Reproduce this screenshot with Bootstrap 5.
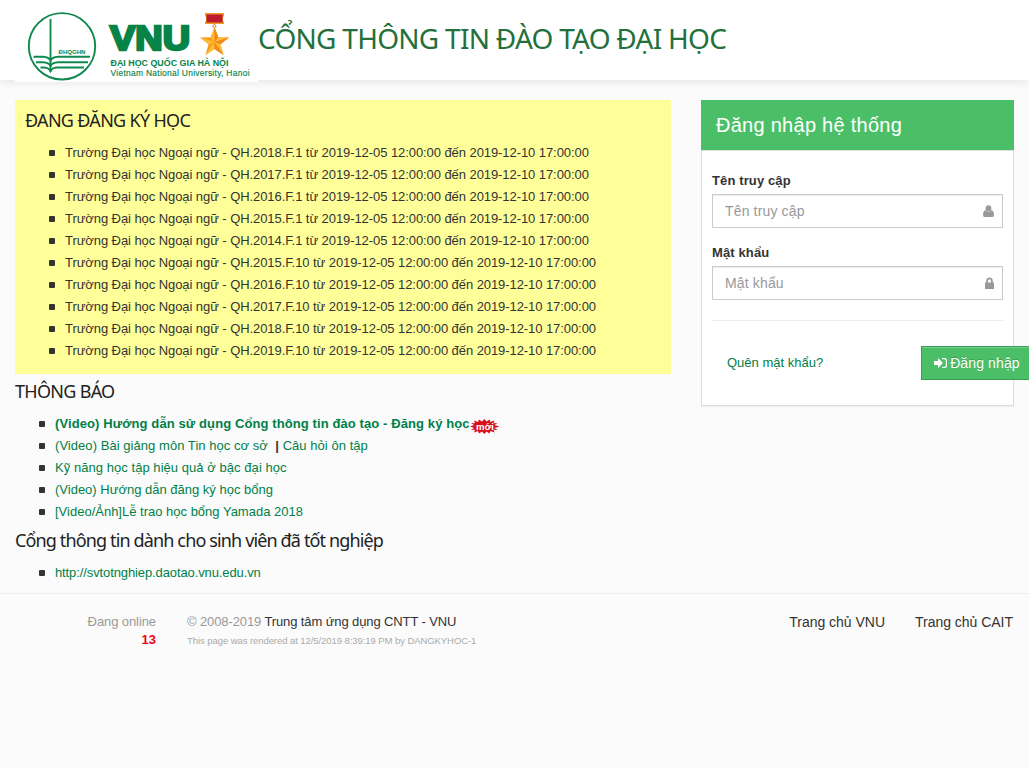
<!DOCTYPE html>
<html lang="vi">
<head>
<meta charset="utf-8">
<meta name="viewport" content="width=device-width, initial-scale=1">
<title>Cổng thông tin đào tạo đại học</title>
<link href="https://cdn.jsdelivr.net/npm/bootstrap@5.3.0/dist/css/bootstrap.min.css" rel="stylesheet">
<style>
html,body{overflow:hidden}
body{font-family:"Liberation Sans",sans-serif;font-size:13px;line-height:22px;color:#333;background:#fbfbfb;height:768px}
a{color:#008048;text-decoration:none}
.container-fluid,.row{--bs-gutter-x:30px}
.site-head{height:80px;background:#fff;box-shadow:0 1px 10px rgba(0,0,0,.1)}
.brand-logo{width:243px;height:82px;background:#fff;flex:none;position:relative}
.site-title{font:28px/34px "Noto Sans",sans-serif;color:#23703d;margin:21px 0 0;white-space:nowrap;letter-spacing:-.73px}
.sec-title{font:18px/24px "Noto Sans",sans-serif;color:#222;margin:0;white-space:nowrap;letter-spacing:-.7px}
.notice{background:#ff9;height:274px;padding:8px 10px 0}
ul.sq{list-style:none;margin:9px 0 0;padding-left:40px}
ul.sq li{height:22px;white-space:nowrap;position:relative}
ul.sq li::before{content:"";position:absolute;left:-16px;top:8px;width:6px;height:6px;background:#333;border-radius:1px}
ul.reg{margin-top:10px;letter-spacing:-.072px}
.login-head{background:#4bbf67;color:#fff;height:50px;font-size:20px;line-height:50px;padding-left:15px;letter-spacing:.27px}
.login-body{background:#fff;border:1px solid #ddd;height:256px;padding:19px 10px 0;box-shadow:0 1px 1px rgba(0,0,0,.05)}
.login-body label{font-weight:bold;display:block;height:24px;letter-spacing:.12px}
.login-body .form-control{height:34px;border:1px solid #ccc;border-radius:0;font-size:14px;padding:6px 12px;letter-spacing:.15px;box-shadow:inset 0 1px 1px rgba(0,0,0,.075)}
.form-control::placeholder{color:#999}
.field-icon{position:absolute;right:9px;top:11px}
.sign-btn{background:#4bbf67;border:1px solid #3a9b51;border-radius:0;color:#fff;height:34px;width:112px;font-size:14px;line-height:20px;padding:6px 11px;text-shadow:0 -1px 0 rgba(0,0,0,.2);box-shadow:inset 0 1px 0 rgba(255,255,255,.25);white-space:nowrap;flex:none}
.site-foot{margin-top:9px;border-top:1px solid #eee;padding-top:18px;font-size:13px;line-height:20px;color:#999}
.site-foot a{color:#333}
.online{width:141px}
.copy{margin-left:31px;letter-spacing:-.11px}
.foot-nav{gap:30px;font-size:14px;padding-right:1px;letter-spacing:-.02px}
.tiny{font-size:9.5px;line-height:18px;letter-spacing:-.07px;color:#aaa}
</style>
</head>
<body>
<header class="site-head">
 <div class="container-fluid d-flex">
  <a class="brand-logo" href="#" aria-label="VNU">
  <svg width="243" height="82" viewBox="15 0 243 82">
   <g fill="none" stroke="#10884f" stroke-width="1.9"><circle cx="62" cy="46.3" r="33.2"/>
   <path d="M50.500 19V72"/><path d="M33.500 56.700H43Q49 57 50.500 60.500Q52 57 58 56.700H90M36 62.300H43Q49 62.600 50.500 66Q52 62.600 58 62.300H88M40.500 67.500H44Q49 67.800 50.500 71Q52 67.800 57 67.500H84"/></g>
   <g font-family="Liberation Sans,sans-serif" fill="#078348">
   <text x="58.500" y="53.800" font-size="6" font-weight="bold" textLength="27" lengthAdjust="spacingAndGlyphs">ĐHQGHN</text>
   <text x="110" y="49.500" font-size="34.500" font-weight="bold" textLength="80" lengthAdjust="spacingAndGlyphs" stroke="#078348" stroke-width="2.600">VNU</text>
   <text x="110.500" y="66" font-size="9.200" font-weight="bold" textLength="118" lengthAdjust="spacingAndGlyphs">ĐẠI HỌC QUỐC GIA HÀ NỘI</text>
   <text x="110.500" y="76" font-size="8.400" textLength="139" lengthAdjust="spacing" stroke="#078348" stroke-width=".15">Vietnam National University, Hanoi</text></g>
   <path d="M205 13h19v3l-1 1v4l1 1v2h-19v-2l1-1v-4l-1-1z" fill="#f09a22"/><path d="M206.500 14.500h16v8h-16z" fill="#bd1a2d"/>
   <circle cx="214.500" cy="26" r="1.500" fill="none" stroke="#d88b2b"/>
   <path d="M214.500 27l3.800 10.200 10.700.4-8.500 6.700 3 10.700-9-6-9 6 3-10.700-8.500-6.700 10.700-.4z" fill="#f99e1f"/>
   <path d="M214.500 27v15l-3.800-4.800zM200 37.600l14.500 4.400-6 2.300zM205.500 55l9-13v7zM223.500 55l-9-13 6 2.300zM229 37.600L214.500 42l3.800-4.800z" fill="#ffbc38"/>
   <path d="M214.500 27v15l3.800-4.800zM229 37.600L214.500 42l6 2.300zM223.500 55l-9-13v7z" fill="#f18a1c"/>
  </svg></a>
  <h1 class="site-title">CỔNG THÔNG TIN ĐÀO TẠO ĐẠI HỌC</h1>
 </div>
</header>
<main class="container-fluid" style="padding-top:20px">
 <div class="row">
  <div class="col-8">
   <section class="notice">
    <h2 class="sec-title">ĐANG ĐĂNG KÝ HỌC</h2>
    <ul class="sq reg">
     <li>Trường Đại học Ngoại ngữ - QH.2018.F.1 từ 2019-12-05 12:00:00 đến 2019-12-10 17:00:00</li>
     <li>Trường Đại học Ngoại ngữ - QH.2017.F.1 từ 2019-12-05 12:00:00 đến 2019-12-10 17:00:00</li>
     <li>Trường Đại học Ngoại ngữ - QH.2016.F.1 từ 2019-12-05 12:00:00 đến 2019-12-10 17:00:00</li>
     <li>Trường Đại học Ngoại ngữ - QH.2015.F.1 từ 2019-12-05 12:00:00 đến 2019-12-10 17:00:00</li>
     <li>Trường Đại học Ngoại ngữ - QH.2014.F.1 từ 2019-12-05 12:00:00 đến 2019-12-10 17:00:00</li>
     <li>Trường Đại học Ngoại ngữ - QH.2015.F.10 từ 2019-12-05 12:00:00 đến 2019-12-10 17:00:00</li>
     <li>Trường Đại học Ngoại ngữ - QH.2016.F.10 từ 2019-12-05 12:00:00 đến 2019-12-10 17:00:00</li>
     <li>Trường Đại học Ngoại ngữ - QH.2017.F.10 từ 2019-12-05 12:00:00 đến 2019-12-10 17:00:00</li>
     <li>Trường Đại học Ngoại ngữ - QH.2018.F.10 từ 2019-12-05 12:00:00 đến 2019-12-10 17:00:00</li>
     <li>Trường Đại học Ngoại ngữ - QH.2019.F.10 từ 2019-12-05 12:00:00 đến 2019-12-10 17:00:00</li>
    </ul>
   </section>
   <h2 class="sec-title" style="margin-top:5px">THÔNG BÁO</h2>
   <ul class="sq" style="margin-top:10px">
    <li class="d-flex"><a href="#" style="letter-spacing:.1px"><b>(Video) Hướng dẫn sử dụng Cổng thông tin đào tạo - Đăng ký học</b></a><svg width="30" height="15" viewBox="0 0 30 15" style="margin-top:6px"><path d="M0 7.500l4-1.500-3-2 4 .3-1-2.800 4 1.500 1-2.500 3 2 2.500-2.500 2 2.500 3-2 1 2.500 4-1.500-1 2.800 4-.3-3 2 5 1.500-5 1.500 3 2-4-.3 1 2.800-4-1.500-1 2.500-3-2-2 2.500-2.500-2.500-3 2-1-2.500-4 1.500 1-2.800-4 .3 3-2z" fill="#d8101b"/><text x="6" y="10.500" textLength="18" lengthAdjust="spacingAndGlyphs" font-size="9" font-weight="bold" fill="#fff">mới</text></svg></li>
    <li style="letter-spacing:.05px"><a href="#">(Video) Bài giảng môn Tin học cơ sở</a>&nbsp; <b>|</b> <a href="#">Câu hỏi ôn tập</a></li>
    <li style="letter-spacing:.05px"><a href="#">Kỹ năng học tập hiệu quả ở bậc đại học</a></li>
    <li><a href="#">(Video) Hướng dẫn đăng ký học bổng</a></li>
    <li><a href="#">[Video/Ảnh]Lễ trao học bổng Yamada 2018</a></li>
   </ul>
   <h2 class="sec-title" style="margin-top:5px;letter-spacing:-.86px">Cổng thông tin dành cho sinh viên đã tốt nghiệp</h2>
   <ul class="sq" style="margin-top:10px;letter-spacing:-.11px"><li><a href="#">http://svtotnghiep.daotao.vnu.edu.vn</a></li></ul>
  </div>
  <div class="col-4">
   <div class="login-head">Đăng nhập hệ thống</div>
   <form class="login-body">
    <label for="user">Tên truy cập</label>
    <div class="position-relative"><input class="form-control" id="user" placeholder="Tên truy cập"><svg class="field-icon" width="11" height="12" viewBox="0 0 11 12" fill="#999"><ellipse cx="5.500" cy="3.400" rx="2.900" ry="3.200"/><path d="M2.500 5.300Q5.500 8.700 8.500 5.300Q11 6 11 9.500Q11 12 9.500 12H1.500Q0 12 0 9.500Q0 6 2.500 5.300z"/></svg></div>
    <label for="pass" style="margin-top:14px">Mật khẩu</label>
    <div class="position-relative"><input class="form-control" id="pass" type="password" placeholder="Mật khẩu"><svg class="field-icon" width="9" height="12" viewBox="0 0 9 12" fill="#999"><path d="M1.200 5.500V4.200a3.300 3.700 0 0 1 6.600 0v1.300H9V12H0V5.500zM3 5.500h3V4.200a1.500 1.900 0 0 0-3 0z"/></svg></div>
    <hr style="margin:20px 0 25px;border-color:#ddd;opacity:.6">
    <div class="d-flex justify-content-between align-items-center" style="padding-left:15px;margin-right:-30px"><a href="#">Quên mật khẩu?</a><button type="button" class="btn sign-btn"><svg width="13" height="12" viewBox="0 0 13 12" fill="#fff" style="vertical-align:-1px;margin-right:-1px"><path d="M0 4h4V1L9 6 4 11V8H0zM8 1h2.500Q13 1 13 3.500v5Q13 11 10.500 11H8V9.800h2.300q1.500 0 1.500-1.500V3.700q0-1.500-1.500-1.500H8z"/></svg> <span style="letter-spacing:.12px">Đăng nhập</span></button></div>
   </form>
  </div>
 </div>
</main>
<footer class="site-foot">
 <div class="container-fluid d-flex">
  <div class="online text-end"><div style="letter-spacing:-.09px">Đang online</div><b class="d-block" style="color:#f00020;line-height:16px;font-size:13px">13</b></div>
  <div class="copy"><div>© 2008-2019 <a href="#">Trung tâm ứng dụng CNTT - VNU</a></div><div class="tiny">This page was rendered at 12/5/2019 8:39:19 PM by DANGKYHOC-1</div></div>
  <nav class="ms-auto d-flex foot-nav"><a href="#">Trang chủ VNU</a><a href="#">Trang chủ CAIT</a></nav>
 </div>
</footer>
<script src="https://cdn.jsdelivr.net/npm/bootstrap@5.3.0/dist/js/bootstrap.bundle.min.js"></script>
</body>
</html>
